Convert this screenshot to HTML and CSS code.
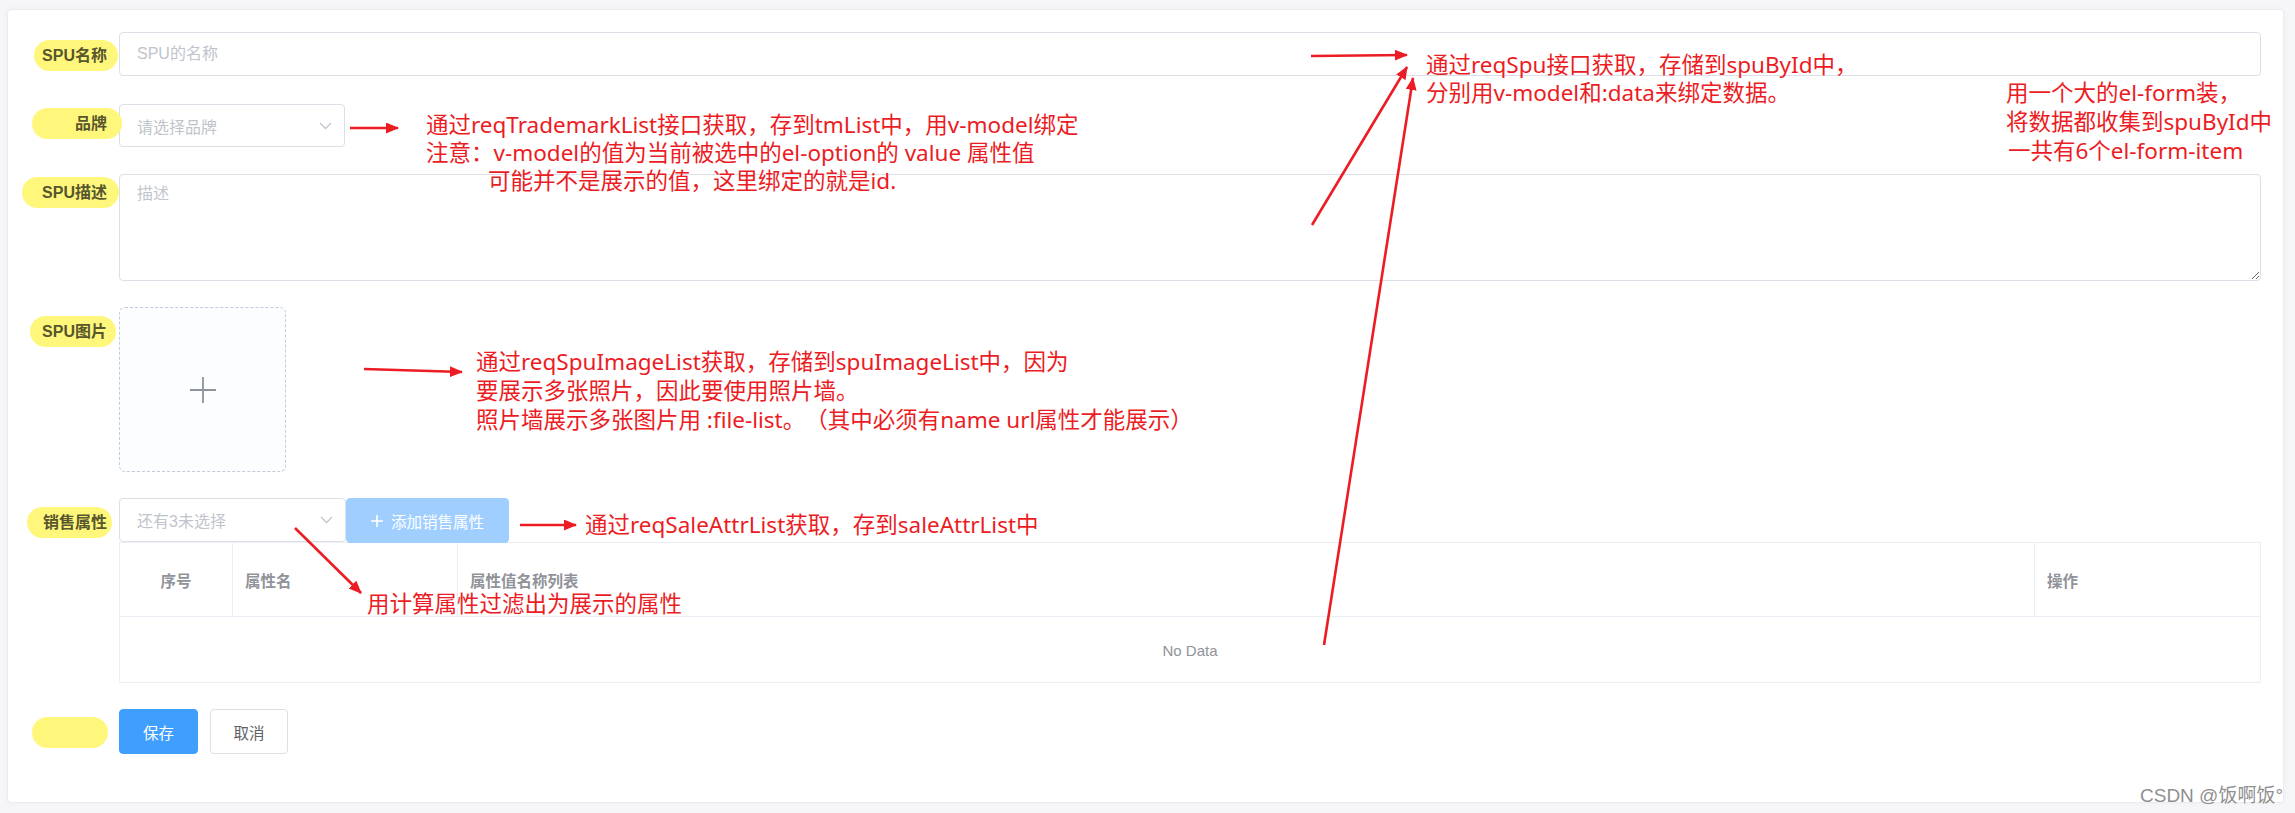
FILE: index.html
```html
<!DOCTYPE html>
<html lang="zh-CN">
<head>
<meta charset="utf-8">
<title>SPU</title>
<link rel="stylesheet" href="styles.css">
</head>
<body>
<div class="page">
  <div class="card">
    <form class="form">
      <div class="item item-1">
        <div class="label"><span class="hl hl-1">SPU名称</span></div>
        <div class="content"><input class="input" placeholder="SPU的名称"></div>
      </div>
      <div class="item item-2">
        <div class="label"><span class="hl hl-2">品牌</span></div>
        <div class="content">
          <div class="select select-sm"><span class="ph">请选择品牌</span>
            <svg class="chev" width="13" height="8" viewBox="0 0 13 8"><polyline points="1,1 6.5,6.5 12,1" fill="none" stroke="#c0c4cc" stroke-width="1.3"/></svg>
          </div>
        </div>
      </div>
      <div class="item item-3">
        <div class="label"><span class="hl hl-3">SPU描述</span></div>
        <div class="content"><textarea class="textarea" placeholder="描述"></textarea></div>
      </div>
      <div class="item item-4">
        <div class="label"><span class="hl hl-4">SPU图片</span></div>
        <div class="content">
          <div class="upload">
            <svg width="28" height="28" viewBox="0 0 28 28"><path d="M1 14H27M14 1V27" stroke="#8c939d" stroke-width="1.8" fill="none"/></svg>
          </div>
        </div>
      </div>
      <div class="item item-5">
        <div class="label"><span class="hl hl-5">销售属性</span></div>
        <div class="content">
          <div class="sale-bar">
            <div class="select select-sale"><span class="ph">还有3未选择</span>
              <svg class="chev" width="13" height="8" viewBox="0 0 13 8"><polyline points="1,1 6.5,6.5 12,1" fill="none" stroke="#c0c4cc" stroke-width="1.3"/></svg>
            </div>
            <button type="button" class="btn btn-add"><svg width="12" height="12" viewBox="0 0 12 12"><path d="M0 6H12M6 0V12" stroke="#fff" stroke-width="1.6"/></svg>添加销售属性</button>
          </div>
          <table class="table">
            <colgroup><col class="c1"><col class="c2"><col><col class="c4"></colgroup>
            <thead>
              <tr><th class="center">序号</th><th>属性名</th><th>属性值名称列表</th><th>操作</th></tr>
            </thead>
            <tbody>
              <tr><td colspan="4" class="empty">No Data</td></tr>
            </tbody>
          </table>
        </div>
      </div>
      <div class="item item-6">
        <div class="label"><span class="hl hl-6"></span></div>
        <div class="content buttons">
          <button type="button" class="btn btn-primary">保存</button>
          <button type="button" class="btn btn-default">取消</button>
        </div>
      </div>
    </form>
  </div>

  <div class="overlay">
    <svg class="arrows" width="2295" height="813" viewBox="0 0 2295 813">
      <defs>
        <marker id="ah" markerUnits="userSpaceOnUse" markerWidth="14" markerHeight="12" refX="12" refY="5.5" orient="auto">
          <path d="M0 0L13 5.5L0 11Z" fill="#ec1c24"/>
        </marker>
      </defs>
      <g stroke="#ec1c24" stroke-width="2.6" fill="none" marker-end="url(#ah)">
        <line x1="350" y1="128" x2="398" y2="128"/>
        <line x1="364" y1="369" x2="462" y2="372"/>
        <line x1="520" y1="525" x2="576" y2="525"/>
        <line x1="295" y1="528" x2="361" y2="593"/>
        <line x1="1311" y1="56" x2="1407" y2="55"/>
        <line x1="1312" y1="225" x2="1407" y2="67"/>
        <line x1="1324" y1="645" x2="1413" y2="78"/>
      </g>
    </svg>
    <div class="note note-brand">
      <div>通过reqTrademarkList接口获取，存到tmList中，用v-model绑定</div>
      <div>注意：v-model的值为当前被选中的el-option的 value 属性值</div>
      <div class="indent">可能并不是展示的值，这里绑定的就是id.</div>
    </div>
    <div class="note note-spu">
      <div>通过reqSpu接口获取，存储到spuById中，</div>
      <div>分别用v-model和:data来绑定数据。</div>
    </div>
    <div class="note note-form">
      <div>用一个大的el-form装，</div>
      <div>将数据都收集到spuById中</div>
      <div class="indent-s">一共有6个el-form-item</div>
    </div>
    <div class="note note-img">
      <div>通过reqSpuImageList获取，存储到spuImageList中，因为</div>
      <div>要展示多张照片，因此要使用照片墙。</div>
      <div>照片墙展示多张图片用 :file-list。（其中必须有name url属性才能展示）</div>
    </div>
    <div class="note note-sale">通过reqSaleAttrList获取，存到saleAttrList中</div>
    <div class="note note-calc">用计算属性过滤出为展示的属性</div>
    <div class="watermark">CSDN @饭啊饭°</div>
  </div>
</div>
</body>
</html>
```

FILE: styles.css
```css
* { box-sizing: border-box; }
html, body { margin: 0; padding: 0; }
body {
  width: 2295px;
  height: 813px;
  background: #f6f6f8;
  font-family: "Liberation Sans", "Noto Sans CJK SC", sans-serif;
  overflow: hidden;
}
.page {
  position: relative;
  width: 2295px;
  height: 813px;
  padding: 9px 11px 0 7px;
}
.card {
  height: 794px;
  background: #fff;
  border: 1px solid #ebebf1;
  border-radius: 4px;
  box-shadow: 0 0 6px rgba(0, 0, 0, 0.03);
  padding: 22px 22px 0 0;
}
.form { display: flex; flex-direction: column; }
.item { display: flex; align-items: flex-start; }
.item-1 { margin-bottom: 28px; }
.item-2 { margin-bottom: 27px; }
.item-3 { margin-bottom: 26px; }
.item-4 { margin-bottom: 26px; }
.item-5 { margin-bottom: 26px; }
.label {
  width: 111px;
  flex: none;
  display: flex;
  justify-content: flex-end;
  padding-right: 12px;
  position: relative;
  z-index: 1;
}
.hl {
  display: inline-block;
  height: 31px;
  line-height: 31px;
  border-radius: 16px;
  background: #fff77c;
  color: #57562c;
  font-size: 16px;
  font-weight: bold;
  white-space: nowrap;
}
.hl-1 { margin-top: 8px; padding: 0 11px 0 8px; margin-right: -11px; }
.hl-2 { margin-top: 4px; padding: 0 15px 0 43px; margin-right: -15px; }
.hl-3 { margin-top: 3px; padding: 0 12px 0 20px; margin-right: -12px; }
.hl-4 { margin-top: 9px; padding: 0 9px 0 12px; margin-right: -9px; }
.hl-5 { margin-top: 9px; padding: 0 5px 0 16px; margin-right: -5px; }
.hl-6 { margin-top: 8px; width: 76px; margin-right: -1px; }
.content { flex: 1; min-width: 0; }
.input, .textarea {
  display: block;
  width: 100%;
  border: 1px solid #dcdfe6;
  border-radius: 4px;
  background: #fff;
  font-family: "Liberation Sans", "Noto Sans CJK SC", sans-serif;
  font-size: 16px;
  color: #606266;
  outline: none;
}
.input { height: 44px; padding: 0 17px; }
.textarea { height: 107px; padding: 7px 17px; resize: vertical; line-height: 24px; }
.input::placeholder, .textarea::placeholder { color: #c0c4cc; }
.select {
  height: 44px;
  border: 1px solid #dcdfe6;
  border-radius: 4px;
  display: flex;
  align-items: center;
  justify-content: space-between;
  padding: 0 12px 0 17px;
  font-size: 16px;
  background: #fff;
}
.select-sm { width: 226px; height: 43px; }
.select-sale { width: 227px; flex: none; }
.ph { color: #c0c4cc; }
.chev { display: block; }
.upload {
  width: 167px;
  height: 165px;
  border: 1px dashed #c0ccda;
  border-radius: 6px;
  background: #fbfdff;
  display: flex;
  align-items: center;
  justify-content: center;
}
.sale-bar { display: flex; height: 44px; }
.btn {
  font-family: "Liberation Sans", "Noto Sans CJK SC", sans-serif;
  font-size: 15.5px;
  border-radius: 4px;
  cursor: pointer;
  display: inline-flex;
  align-items: center;
  justify-content: center;
}
.btn-add {
  width: 163px;
  height: 45px;
  background: #a0cfff;
  border: 1px solid #a0cfff;
  color: #fff;
  gap: 8px;
  padding: 0;
}
.table {
  width: 100%;
  margin-top: 0;
  border-collapse: collapse;
  table-layout: fixed;
  font-size: 15.5px;
}
.table .c1 { width: 113px; }
.table .c2 { width: 225px; }
.table .c4 { width: 226px; }
.table th, .table td { border: 1px solid #ebeef5; }
.table th {
  height: 74px;
  text-align: left;
  padding: 0 12px;
  color: #909399;
  font-weight: bold;
}
.table th.center { text-align: center; }
.table td.empty {
  height: 66px;
  text-align: center;
  color: #909399;
  font-size: 15px;
  padding-top: 2px;
}
.buttons { display: flex; gap: 12px; }
.btn-primary {
  width: 79px;
  height: 45px;
  background: #409eff;
  border: 1px solid #409eff;
  color: #fff;
}
.btn-default {
  width: 78px;
  height: 45px;
  background: #fff;
  border: 1px solid #dcdfe6;
  color: #606266;
}
.overlay {
  position: absolute;
  left: 0;
  top: 0;
  width: 2295px;
  height: 813px;
  pointer-events: none;
}
.arrows { position: absolute; left: 0; top: 0; }
.note {
  position: absolute;
  color: #ec1c24;
  font-family: "Noto Sans", "Noto Sans CJK SC", sans-serif;
  font-size: 22.5px;
  line-height: 28px;
  white-space: nowrap;
  text-spacing-trim: space-all;
}
.note-brand { left: 426px; top: 111px; }
.note-brand .indent { padding-left: 62px; }
.note-spu { left: 1426px; top: 51px; }
.note-form { left: 2006px; top: 78px; line-height: 29px; }
.note-form .indent-s { padding-left: 2px; }
.note-img { left: 476px; top: 347px; line-height: 29px; }
.note-sale { left: 585px; top: 511px; }
.note-calc { left: 367px; top: 590px; }
.watermark {
  position: absolute;
  right: 12px;
  bottom: 6px;
  font-family: "Liberation Sans", "Noto Sans CJK SC", sans-serif;
  font-size: 19px;
  color: #8f8f8f;
  text-shadow: 0 0 1px #fff;
}
```
